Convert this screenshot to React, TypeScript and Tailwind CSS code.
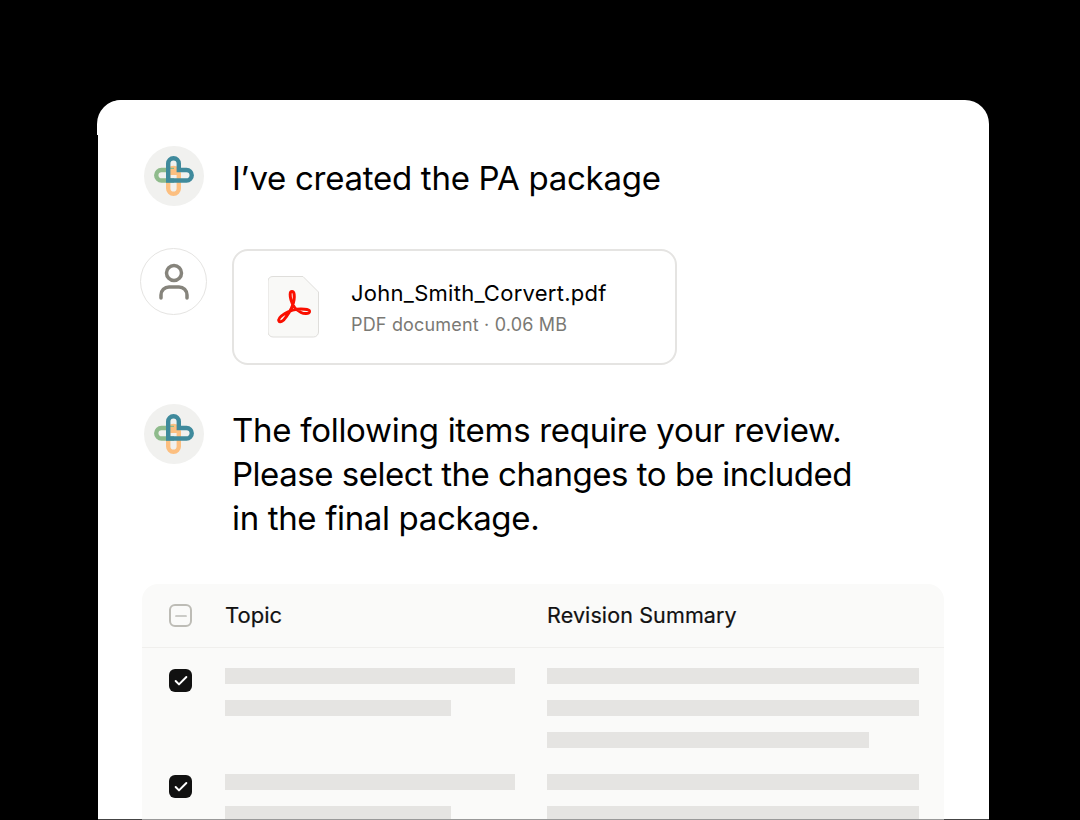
import { Check, Minus } from "lucide-react";

const logo = (
  <div className="flex size-[60px] shrink-0 items-center justify-center rounded-full bg-[#f1f1ef]">
    <svg width="40" height="40" viewBox="0 0 40 40" fill="none" strokeWidth="4.4">
      <rect x="14.2" y="12" width="10.6" height="25.800" rx="5.300" stroke="#fcbf80" />
      <path d="M20 24.500H7.500a5.250 5.250 0 0 1 0-10.500H20" stroke="#8fbb8c" />
      <rect x="16" y="13" width="8" height="6" fill="#fcbf80" stroke="none" />
      <path d="M14.200 24.500V7.500a5.300 5.300 0 0 1 10.600 0V14H32.500a5.250 5.250 0 0 1 0 10.500H14.200Z" stroke="#3f8a9c" />
    </svg>
  </div>
);

function Row({ left, right }: { left: number[]; right: number[] }) {
  return (
    <div className="flex h-[106px] pt-5">
      <div className="w-[83px] pl-[27px] pt-px">
        <div className="flex size-[23px] items-center justify-center rounded-[6px] bg-[#111]">
          <Check className="size-4 text-white" strokeWidth={3} />
        </div>
      </div>
      <div className="flex w-[322px] flex-col gap-4">
        {left.map((w, i) => (
          <div key={i} className="h-4 bg-[#e5e4e2]" style={{ width: w }} />
        ))}
      </div>
      <div className="flex flex-col gap-4">
        {right.map((w, i) => (
          <div key={i} className="h-4 bg-[#e5e4e2]" style={{ width: w }} />
        ))}
      </div>
    </div>
  );
}

export default function App() {
  return (
    <div className="h-[820px] overflow-hidden bg-black pl-[98px] pt-[100px] font-['Inter',sans-serif]">
      <div className="relative h-[720px] w-[891px] rounded-t-[24px] border-b border-[#444] bg-white pl-[46px] pt-[46px]">
        <div className="absolute -left-px top-0 h-[35px] w-[30px] rounded-tl-[24px] bg-white" />

        <div className="relative flex items-center gap-7">
          {logo}
          <p className="mt-[4px] text-[33px] leading-[44px] tracking-[-0.27px] text-black">I’ve created the PA package</p>
        </div>

        <div className="mt-[43px] flex gap-[25px]">
          <div className="-ml-[4px] mt-[-1px] flex size-[67px] items-center justify-center rounded-full border border-[#e5e4e2]">
            <svg width="36" height="38" viewBox="0 0 36 38" fill="none" stroke="#86847c" strokeWidth="3.500" strokeLinecap="round">
              <circle cx="18" cy="10" r="7.500" />
              <path d="M5 35v-3a8 8 0 0 1 8-8h10a8 8 0 0 1 8 8v3" />
            </svg>
          </div>
          <div className="flex h-[116px] w-[445px] items-center gap-8 rounded-[16px] border-2 border-[#e5e4e2] pl-[34px]">
            <svg width="51" height="62" viewBox="0 0 51 62" fill="none">
              <path d="M5 .5h30L50.500 16v40a5 5 0 0 1-5 5H5a5 5 0 0 1-5-5V5a5 5 0 0 1 5-4.500Z" fill="#f9f9f7" stroke="#dfdedb" />
              <path
                d="M24 15.500C21.500 15.500 22 20 23 24 24.500 30 29 34.500 33 36.500 36 38 41 38 41.500 36 42 33.500 37 33 33 33 27 33 21 35 17 37.500 13 40 10 43 11 45 12 47 15.500 45 18 41 21 37 25 31 26 24 26.500 20 26.500 15.500 24 15.500Z"
                stroke="#fa0f00"
                strokeWidth="3"
              />
            </svg>
            <div>
              <p className="mt-[2px] text-[22px] leading-[28px] tracking-[0.27px] text-black">John_Smith_Corvert.pdf</p>
              <p className="mt-[6px] text-[18px] leading-6 tracking-[0.18px] text-[#7a7974]">PDF document · 0.06 MB</p>
            </div>
          </div>
        </div>

        <div className="mt-[39px] flex gap-7">
          {logo}
          <p className="mt-[4px] text-[33px] leading-[44px] text-black">
            <span className="block tracking-[-0.28px]">The following items require your review.</span>
            <span className="block tracking-[-0.48px]">Please select the changes to be included</span>
            <span className="block tracking-[-0.35px]">in the final package.</span>
          </p>
        </div>

        <div className="mt-[44px] h-[236px] w-[802px] -translate-x-[2px] overflow-hidden rounded-t-[16px] border-b border-[#999] bg-[#fafaf9]">
          <div className="flex h-[64px] items-center border-b border-[#f0efed]">
            <div className="w-[83px] pl-[27px]">
              <div className="flex size-[23px] items-center justify-center rounded-[6px] border-2 border-[#bdbcb6]">
                <Minus className="size-[18px] text-[#9c9b95]" strokeWidth={1.6} />
              </div>
            </div>
            <p className="w-[322px] text-[22px] text-[#111] [-webkit-text-stroke:0.2px_#111]">Topic</p>
            <p className="text-[21.5px] tracking-[0.12px] text-[#111] [-webkit-text-stroke:0.2px_#111]">Revision Summary</p>
          </div>
          <Row left={[290, 226]} right={[372, 372, 322]} />
          <Row left={[290, 226]} right={[372, 372]} />
        </div>
      </div>
    </div>
  );
}
